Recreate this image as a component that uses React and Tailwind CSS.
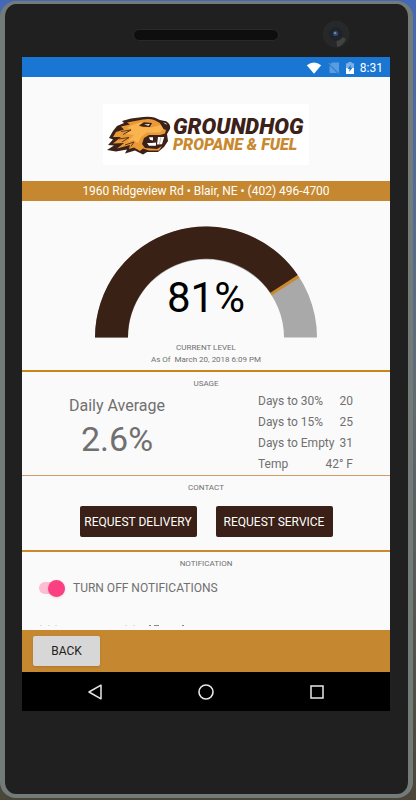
import { useState } from "react";

const forecasts = [
  { label: "Days to 30%", value: "20" },
  { label: "Days to 15%", value: "25" },
  { label: "Days to Empty", value: "31" },
  { label: "Temp", value: "42° F" },
];

function StatusBar() {
  return (
    <header className="flex h-5 items-center justify-end gap-1.5 bg-[#1976d2] pt-px pr-[7px] text-xs text-white">
      <svg className="h-3 w-4" viewBox="0 0 16 12" fill="white" aria-hidden="true">
        <path d="M0.8 3.2Q8-2 15.2 3.2L8 11.8Z" />
      </svg>
      <svg className="h-3 w-3" viewBox="0 0 12 12" aria-hidden="true">
        <path d="M4 .5H11v10.2L2.2 2.3ZM1.5 3.3L9 11H1.5Z" fill="#5a9cde" />
        <path d="M.8 1L11 11.5" stroke="#5a9cde" />
      </svg>
      <svg className="h-3 w-2" viewBox="0 0 8 12" aria-hidden="true">
        <path d="M2.4 0h3.2v1.2H8V6H0V1.2h2.4Z" fill="#7fb1e4" />
        <path d="M0 6h8v6H0Z" fill="white" />
        <path d="M4.9 2.8L1.6 7h2l-.5 3 3.4-4.2h-2Z" fill="#1976d2" />
      </svg>
      <time>8:31</time>
    </header>
  );
}

function GroundhogMark() {
  return (
    <svg className="h-10 w-16 shrink-0" viewBox="0 0 64 40" aria-hidden="true">
      <path d="M10 11L17 8 15 6 24 3.5 36 2Q46 .5 53 5L59 6.2Q64 9 63 14L60 19 61 26 57 32 51 37 40 37 36 39.5 28 35.5 18 38.5 20 34.5 9 36.5 0 35 7 30.5 1 30 6 24.5 2 23 6 16Z" fill="#3b2118" />
      <path d="M14 11.5L23 9.5 20 7.5 36 4.5Q45 2.5 51 7L56 9.5 59 15 58 18.5 53 20 42 20 37 23 35 29 38 33 50 34 55 31 52 35.5 42 35.5 36 33.5 33 36 27 32.5 22 34 23 30 10 33.5 17 28 6 28.5 14 22 6 22 9 17 17 14.5Z" fill="#e99a37" />
      <path d="M24 10.5L36 6.5 32 12 44 12.5 54 10 57 14 52 17.5 40 17.5 34 22 31 28 26 25 20 27 27 20 19 19 25 14 20 13Z" fill="#f9b44f" />
      <path d="M32 10.5L37 7.2 45 8 43 12 36 11.8Z" fill="#3b2118" />
      <path d="M37 9.6L43 9 41.5 10.8Z" fill="#fff" />
      <path d="M52 6.5L59 6.5 62.5 11 60.5 15.5 56.5 14Z" fill="#3b2118" />
      <path d="M56 7.6L59 8 60 10Z" fill="#d8c9bd" />
      <path d="M38.5 24L42 21.5H58.5L56 29 52 32H40L37 28.5Z" fill="#3b2118" />
      <path d="M42 22.3H46V25.5L43 24.8ZM51 22H57.2L55 29.2 50 29.5ZM40 28H44.5L49 27.5V30.8H42Z" fill="#fff" />
      <path d="M54 22L52.5 29" stroke="#b9aaa1" strokeWidth=".8" />
      <path d="M14 16.5L24 15 16 19.5M12 24L22 22.5 15 27M18 30L27 27 24 31.5" fill="none" stroke="#3b2118" strokeWidth=".8" />
    </svg>
  );
}

function Logo() {
  return (
    <div className="flex justify-center pt-[27px] pb-4">
      <div className="flex h-[61px] w-[206px] items-center bg-white pl-1">
        <GroundhogMark />
        <div className="pl-0.5 font-[Roboto] whitespace-nowrap italic">
          <div className="text-[22px] leading-[19px] font-black text-[#3b2118]">GROUNDHOG</div>
          <div className="text-[16px] leading-[17px] font-black text-[#c9892f]">PROPANE &amp; FUEL</div>
        </div>
      </div>
    </div>
  );
}

function Gauge() {
  return (
    <section className="flex h-[171px] flex-col items-center border-b-2 border-[#c98519] pt-[25px]">
      <div className="relative">
        <svg className="block h-28 w-[222px]" viewBox="0 0 222 112" role="img" aria-label="Tank level 81%">
          <path d="M0 111.5A111 111 0 0 1 222 111.5H189A78 78 0 0 0 33 111.5Z" fill="#a9a9a9" />
          <path d="M170 31.5A111 111 0 0 1 204.6 51.5L176.8 69.3A78 78 0 0 0 165 54Z" fill="#c98a2e" />
          <path d="M0 111.5A111 111 0 0 1 202.7 49L175.4 66.8A78 78 0 0 0 33 111.5Z" fill="#3a2116" />
        </svg>
        <div className="absolute inset-x-0 bottom-4 text-center text-[42px] leading-[48px] text-black">81%</div>
      </div>
      <h2 className="pt-1 text-[8px] leading-3">CURRENT LEVEL</h2>
      <p className="text-[8px] leading-3 whitespace-pre">As Of  March 20, 2018 6:09 PM</p>
    </section>
  );
}

function Usage() {
  return (
    <section className="h-[104px] border-b border-[#d39b68] pt-1.5">
      <h2 className="text-center text-[8px] leading-3">USAGE</h2>
      <div className="grid grid-cols-[190px_1fr] pr-[37px]">
        <div className="pt-1 text-center">
          <div className="text-base leading-6">Daily Average</div>
          <div className="text-[34px] leading-[42px]">2.6%</div>
        </div>
        <dl className="pl-[46px] text-xs">
          {forecasts.map((item) => (
            <div key={item.label} className="flex h-[21px] items-center justify-between whitespace-nowrap">
              <dt>{item.label}</dt>
              <dd>{item.value}</dd>
            </div>
          ))}
        </dl>
      </div>
    </section>
  );
}

function Contact() {
  return (
    <section className="h-[76px] border-b-2 border-[#c98a2e] pt-1.5">
      <h2 className="text-center text-[8px] leading-3">CONTACT</h2>
      <div className="flex justify-center gap-[19px] pt-3">
        <button type="button" className="h-[31px] w-[117px] rounded-xs bg-[#3a2016] text-xs whitespace-nowrap text-white">REQUEST DELIVERY</button>
        <button type="button" className="h-[31px] w-[117px] rounded-xs bg-[#3a2016] text-xs whitespace-nowrap text-white">REQUEST SERVICE</button>
      </div>
    </section>
  );
}

function Notifications() {
  const [on, setOn] = useState(true);
  return (
    <section className="flex h-[78px] flex-col pt-1.5">
      <h2 className="text-center text-[8px] leading-3">NOTIFICATION</h2>
      <label className="flex items-center gap-2 pt-2.5 pl-[17px] text-xs">
        <input type="checkbox" role="switch" checked={on} onChange={() => setOn(!on)} className="peer sr-only" />
        <span className="flex h-3 w-[26px] items-center rounded-full bg-[#fdbdd2] peer-checked:justify-end">
          <span className="size-[17px] shrink-0 rounded-full bg-[#fb4081] shadow-sm" />
        </span>
        TURN OFF NOTIFICATIONS
      </label>
      <svg className="mt-auto mb-1 ml-[17px] h-px w-40" viewBox="0 0 160 1" aria-hidden="true">
        <path d="M1 .5h2M9 .5h2M16 .5h2M86 .5h2M94 .5h2" stroke="#dddddd" />
        <path d="M110 .5h2M115 .5h5M143 .5h2" stroke="#888888" />
      </svg>
    </section>
  );
}

function AndroidNav() {
  return (
    <nav className="flex h-[39px] items-center justify-around bg-black px-[18px] text-[#e8e8e8]">
      <button type="button" aria-label="Back">
        <svg className="size-4" viewBox="0 0 16 16" fill="none" stroke="currentColor" strokeWidth="1.5">
          <path d="M2 8L14 1.2V14.8Z" strokeLinejoin="round" />
        </svg>
      </button>
      <button type="button" aria-label="Home">
        <svg className="size-4" viewBox="0 0 16 16" fill="none" stroke="currentColor" strokeWidth="1.6">
          <circle cx="8" cy="8" r="7" />
        </svg>
      </button>
      <button type="button" aria-label="Overview">
        <svg className="size-4" viewBox="0 0 16 16" fill="none" stroke="currentColor" strokeWidth="1.5">
          <path d="M2 2H14V14H2Z" />
        </svg>
      </button>
    </nav>
  );
}

export default function App() {
  return (
    <div className="min-h-screen bg-linear-to-b from-[#4468b8] via-[#626b70] to-[#4a4639] pt-px pr-[3px] pb-0.5 font-[Roboto,sans-serif]">
      <div className="rounded-2xl border-x-[5px] border-t-[3px] border-b-[4px] border-[#727b78] bg-[#202020] pr-[18px] pb-[83px] pl-[17px]">
        <div className="grid h-[53px] grid-cols-[1fr_146px_1fr] items-center">
          <div className="col-start-2 mt-2 h-3 rounded-full border border-[#292929] bg-[#0e0e0e]" />
          <div className="flex justify-end pr-[40px]">
            <svg className="mt-1.5 size-7" viewBox="0 0 28 28" aria-hidden="true">
              <circle cx="14" cy="14" r="13.5" fill="#27282a" />
              <path d="M14 14L24 19Q21 26 15 27Z" fill="#414242" />
              <circle cx="14" cy="14" r="7" fill="#202329" />
              <circle cx="13.5" cy="13.5" r="2.5" fill="#344d72" />
              <circle cx="13" cy="13" r="1" fill="#7a9abf" />
            </svg>
          </div>
        </div>
        <div className="bg-[#fafafa] text-[#707070]">
          <StatusBar />
          <main>
            <Logo />
            <address className="flex h-5 items-center justify-center bg-[#c58830] text-xs whitespace-nowrap text-white not-italic">
              1960 Ridgeview Rd • Blair, NE • (402) 496-4700
            </address>
            <Gauge />
            <Usage />
            <Contact />
            <Notifications />
          </main>
          <footer className="flex h-[42px] bg-[#c58830] px-[11px] pt-[6px]">
            <button type="button" className="h-[30px] w-[67px] rounded-xs bg-[#d6d7d6] text-xs text-[#222222] shadow-sm">BACK</button>
          </footer>
          <AndroidNav />
        </div>
      </div>
    </div>
  );
}
